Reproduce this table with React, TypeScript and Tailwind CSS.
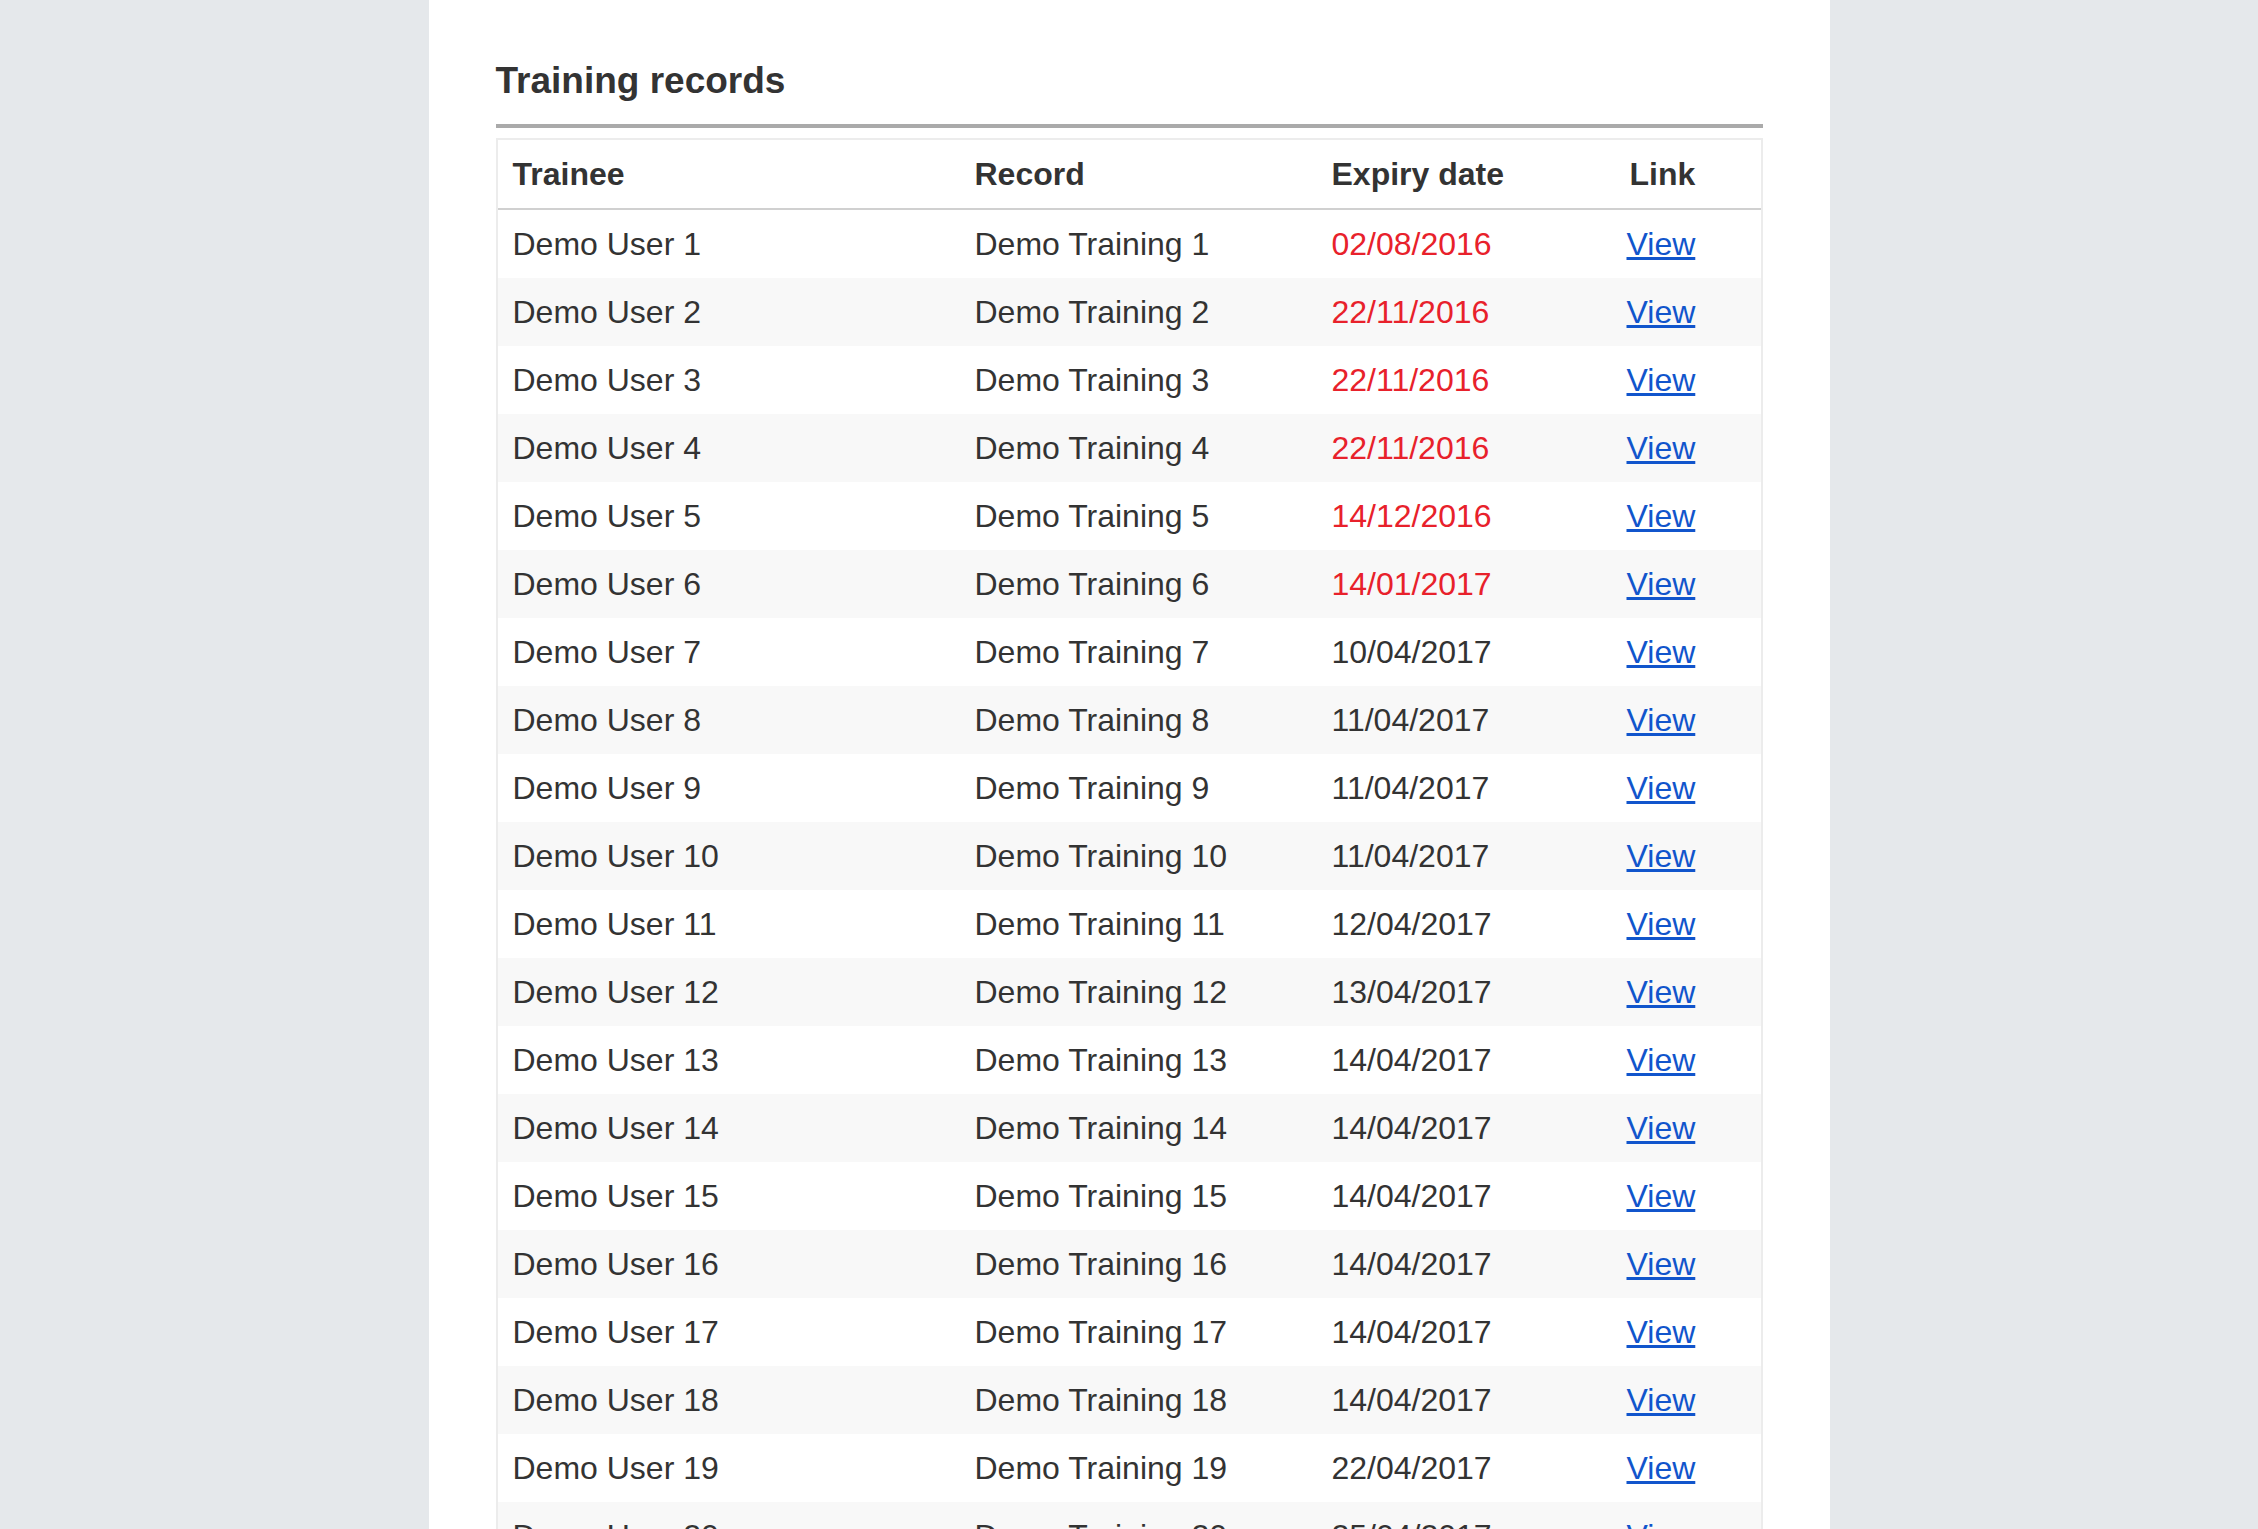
import React from "react";

type Row = { n: number; date: string; expired: boolean };

const dates = [
  "02/08/2016",
  "22/11/2016",
  "22/11/2016",
  "22/11/2016",
  "14/12/2016",
  "14/01/2017",
  "10/04/2017",
  "11/04/2017",
  "11/04/2017",
  "11/04/2017",
  "12/04/2017",
  "13/04/2017",
  "14/04/2017",
  "14/04/2017",
  "14/04/2017",
  "14/04/2017",
  "14/04/2017",
  "14/04/2017",
  "22/04/2017",
  "25/04/2017",
  "26/04/2017",
  "28/04/2017",
];

const rows: Row[] = dates.map((d, i) => ({ n: i + 1, date: d, expired: i < 6 }));

export default function App() {
  return (
    <div
      className="min-h-screen w-full bg-[#e5e8eb] flex justify-center text-[#333333]"
      style={{ fontFamily: '"Liberation Sans", Arial, Helvetica, sans-serif' }}
    >
      <div className="w-[1401px] min-h-screen bg-white px-[67px] pt-[59px] pb-[60px]">
        <h1 className="text-[37px] leading-[44px] font-bold text-[#333333]">Training records</h1>
        <div className="mt-[21px] h-[4px] bg-[#aaaaaa]" />
        <div className="mt-[10px] border-2 border-[#ececec]">
          <div className="grid grid-cols-[462px_357px_295px_1fr] h-[70px] border-b-2 border-[#d0d0d0] text-[32px] font-bold items-center">
            <div className="pl-[15px]">Trainee</div>
            <div className="pl-[15px]">Record</div>
            <div className="pl-[15px]">Expiry date</div>
            <div className="pl-[18px]">Link</div>
          </div>
          {rows.map((r) => (
            <div
              key={r.n}
              className={`grid grid-cols-[462px_357px_295px_1fr] h-[68px] items-center text-[32px] ${
                r.n % 2 === 0 ? "bg-[#f8f8f8]" : "bg-white"
              }`}
            >
              <div className="pl-[15px]">Demo User {r.n}</div>
              <div className="pl-[15px]">Demo Training {r.n}</div>
              <div className={`pl-[15px] ${r.expired ? "text-[#e8212b]" : "text-[#333333]"}`}>{r.date}</div>
              <div className="pl-[15px]">
                <a href="#" className="text-[#1155cc] underline">
                  View
                </a>
              </div>
            </div>
          ))}
        </div>
      </div>
    </div>
  );
}
